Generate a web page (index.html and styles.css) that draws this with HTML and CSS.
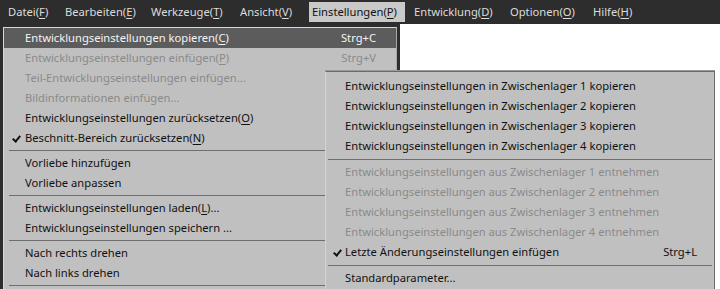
FILE: index.html
```html
<!DOCTYPE html>
<html lang="de">
<head>
<meta charset="utf-8">
<link rel="stylesheet" href="styles.css">
</head>
<body>
<nav class="menubar">
  <span class="mb-item w-datei">Datei(<u>F</u>)</span>
  <span class="mb-item w-bearb">Bearbeiten(<u>E</u>)</span>
  <span class="mb-item w-werk">Werkzeuge(<u>T</u>)</span>
  <span class="mb-item w-ansicht">Ansicht(<u>V</u>)</span>
  <span class="mb-item active w-einst">Einstellungen(<u>P</u>)</span>
  <span class="mb-item w-entw">Entwicklung(<u>D</u>)</span>
  <span class="mb-item w-opt">Optionen(<u>O</u>)</span>
  <span class="mb-item">Hilfe(<u>H</u>)</span>
</nav>

<div class="frame">
  <ul class="menu main">
    <li class="row hl"><span class="label">Entwicklungseinstellungen kopieren(<u>C</u>)</span><span class="key">Strg+C</span></li>
    <li class="row dis"><span class="label">Entwicklungseinstellungen einfügen(<u>P</u>)</span><span class="key">Strg+V</span></li>
    <li class="row dis"><span class="label">Teil-Entwicklungseinstellungen einfügen...</span></li>
    <li class="row dis"><span class="label">Bildinformationen einfügen...</span></li>
    <li class="row"><span class="label">Entwicklungseinstellungen zurücksetzen(<u>O</u>)</span></li>
    <li class="row checked"><span class="label">Beschnitt-Bereich zurücksetzen(<u>N</u>)</span></li>
    <li class="sep"></li>
    <li class="row"><span class="label">Vorliebe hinzufügen</span></li>
    <li class="row"><span class="label">Vorliebe anpassen</span></li>
    <li class="sep"></li>
    <li class="row"><span class="label">Entwicklungseinstellungen laden(<u>L</u>)...</span></li>
    <li class="row"><span class="label">Entwicklungseinstellungen speichern ...</span></li>
    <li class="sep"></li>
    <li class="row"><span class="label">Nach rechts drehen</span></li>
    <li class="row"><span class="label">Nach links drehen</span></li>
    <li class="sep"></li>
  </ul>
</div>

<ul class="menu sub">
  <li class="row"><span class="label">Entwicklungseinstellungen in Zwischenlager 1 kopieren</span></li>
  <li class="row"><span class="label">Entwicklungseinstellungen in Zwischenlager 2 kopieren</span></li>
  <li class="row"><span class="label">Entwicklungseinstellungen in Zwischenlager 3 kopieren</span></li>
  <li class="row"><span class="label">Entwicklungseinstellungen in Zwischenlager 4 kopieren</span></li>
  <li class="sep"></li>
  <li class="row dis"><span class="label">Entwicklungseinstellungen aus Zwischenlager 1 entnehmen</span></li>
  <li class="row dis"><span class="label">Entwicklungseinstellungen aus Zwischenlager 2 entnehmen</span></li>
  <li class="row dis"><span class="label">Entwicklungseinstellungen aus Zwischenlager 3 entnehmen</span></li>
  <li class="row dis"><span class="label">Entwicklungseinstellungen aus Zwischenlager 4 entnehmen</span></li>
  <li class="row checked"><span class="label">Letzte Änderungseinstellungen einfügen</span><span class="key">Strg+L</span></li>
  <li class="sep"></li>
  <li class="row"><span class="label">Standardparameter...</span></li>
</ul>
</body>
</html>
```

FILE: styles.css
```css
* { box-sizing: border-box; }
html, body {
  margin: 0;
  padding: 0;
  background: #ffffff;
  width: 720px;
  height: 289px;
  overflow: hidden;
  font-family: "Noto Sans", "Open Sans", sans-serif;
  font-size: 11.2px;
}
u { text-decoration: underline; text-underline-offset: 2px; }

.menubar {
  height: 24px;
  background: #2d2d2d;
  color: #dcdcdc;
  display: flex;
  align-items: center;
}
.mb-item {
  flex: none;
  height: 20px;
  line-height: 20px;
  padding: 0 0 0 8px;
  white-space: nowrap;
}
.w-datei { width: 57px; }
.w-bearb { width: 86px; }
.w-werk { width: 89px; }
.w-ansicht { width: 77px; }
.w-einst { width: 96px; }
.w-entw { width: 96px; }
.w-opt { width: 83px; }
.mb-item.active {
  background: #c9c9c9;
  color: #111;
  padding-left: 3px;
}
.w-entw, .w-opt, .w-opt + .mb-item { padding-left: 9px; }

.frame {
  position: absolute;
  left: 0;
  top: 24px;
  width: 400px;
  height: 265px;
  background: #2d2d2d;
  padding: 3px 3px 0 3px;
}

.menu {
  list-style: none;
  margin: 0;
  background: #c0c0c0;
  color: #111;
}
.main {
  height: 100%;
  border-top: 1px solid #d8d8d8;
  border-left: 1px solid #d8d8d8;
  border-right: 1px solid #a8a8a8;
  padding: 0;
}
.sub {
  position: absolute;
  left: 325px;
  top: 71px;
  width: 390px;
  height: 222px;
  padding: 4px 0 3px 0;
  border: 1px solid #6a6a6a;
  border-left-color: #d4d4d4;
  box-shadow: 0 -1px 0 #9a9a9a;
}

.row {
  position: relative;
  height: 20px;
  line-height: 20px;
  display: flex;
  justify-content: space-between;
  white-space: nowrap;
}
.main .row { padding: 0 20px 0 21px; }
.sub .row { padding: 0 17px 0 19px; }

.row.hl { background: #5c5c5c; color: #f4f4f4; }
.row.dis { color: #8a8a8a; }

.checked::before {
  content: "";
  position: absolute;
  width: 3px;
  height: 6px;
  border: solid #111;
  border-width: 0 2px 2px 0;
  transform: rotate(40deg);
}
.main .checked::before { left: 10px; top: 6px; }
.sub .checked::before { left: 9px; top: 6px; }

.sep {
  height: 5px;
  display: flex;
  align-items: center;
}
.sub .sep { height: 6px; }
.sep::after {
  content: "";
  flex: 1;
  height: 1px;
  background: #6e6e6e;
}
.main .sep { padding: 0 0 0 5px; }
.sub .sep { padding: 0 2px 0 2px; }
```
